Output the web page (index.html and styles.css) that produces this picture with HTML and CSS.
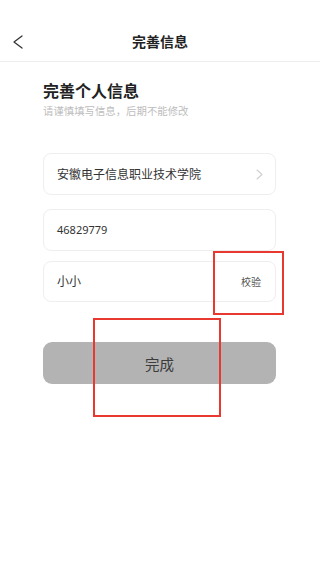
FILE: index.html
```html
<!DOCTYPE html>
<html lang="zh-CN">
<head>
<meta charset="utf-8">
<meta name="viewport" content="width=device-width, initial-scale=1">
<title>完善信息</title>
<link rel="stylesheet" href="styles.css">
</head>
<body>
<div class="page">
  <header class="navbar">
    <button class="back" aria-label="返回">
      <svg width="10" height="14" viewBox="0 0 10 14"><polyline points="9,1 1,7 9,13" fill="none" stroke="#333" stroke-width="1.3" stroke-linecap="round" stroke-linejoin="round"/></svg>
    </button>
    <h1 class="nav-title">完善信息</h1>
  </header>
  <main class="content">
    <h2 class="heading">完善个人信息</h2>
    <p class="subtitle">请谨慎填写信息，后期不能修改</p>
    <div class="field field-school">
      <span class="field-text">安徽电子信息职业技术学院</span>
      <svg class="chev" width="7" height="11" viewBox="0 0 7 11"><polyline points="1,1 6,5.5 1,10" fill="none" stroke="#cfcfcf" stroke-width="1.1" stroke-linecap="round" stroke-linejoin="round"/></svg>
    </div>
    <div class="field field-id">
      <span class="field-text num">46829779</span>
    </div>
    <div class="field field-name">
      <span class="field-text name">小小</span>
      <span class="verify">校验</span>
    </div>
    <button class="submit">完成</button>
  </main>
  <div class="mark mark-verify"></div>
  <div class="mark mark-submit"></div>
</div>
</body>
</html>
```

FILE: styles.css
```css
* { box-sizing: border-box; }
html, body {
  margin: 0;
  padding: 0;
  background: #fff;
}
body {
  font-family: "Noto Sans CJK SC", "Noto Sans", sans-serif;
  color: #333;
}
.page {
  position: relative;
  width: 320px;
  min-height: 569px;
  padding-top: 20px;
}
.navbar {
  position: relative;
  height: 42px;
  border-bottom: 1px solid #eeeeee;
  display: flex;
  align-items: center;
  justify-content: center;
}
.back {
  position: absolute;
  left: 13px;
  top: 15px;
  padding: 0;
  border: 0;
  background: none;
  display: flex;
}
.nav-title {
  margin: 0;
  font-size: 14px;
  font-weight: 700;
  color: #222;
  line-height: 20px;
}
.content {
  padding: 0 44px 0 43px;
  display: flex;
  flex-direction: column;
}
.heading {
  margin: 17px 0 0;
  font-size: 16px;
  font-weight: 700;
  line-height: 22px;
  color: #222;
}
.subtitle {
  margin: 2px 0 0;
  font-size: 10.4px;
  line-height: 16px;
  color: #bdbdbd;
}
.field {
  height: 42px;
  border: 1px solid #eeeeee;
  border-radius: 8px;
  display: flex;
  align-items: center;
  justify-content: space-between;
  padding: 0 12px 0 13px;
}
.field-school { margin-top: 34px; }
.field-id { margin-top: 14px; }
.field-name { margin-top: 10px; height: 41px; padding-right: 14px; }
.field-text {
  font-size: 12px;
  color: #333;
  line-height: 16px;
}
.num {
  font-family: "Noto Sans", sans-serif;
  font-size: 11px;
}
.name { margin-top: -2px; }
.verify {
  font-size: 10px;
  color: #555;
  line-height: 14px;
}
.submit {
  margin-top: 40px;
  height: 42px;
  border: 0;
  border-radius: 9px;
  background: #b3b3b3;
  color: #3c3c3c;
  font-family: "Noto Sans CJK SC", sans-serif;
  font-size: 14.5px;
  padding: 0;
}
.mark {
  position: absolute;
  border: 2px solid #e8382f;
}
.mark-verify {
  left: 213px;
  top: 251px;
  width: 71px;
  height: 64px;
}
.mark-submit {
  left: 93px;
  top: 318px;
  width: 128px;
  height: 99px;
}
```
